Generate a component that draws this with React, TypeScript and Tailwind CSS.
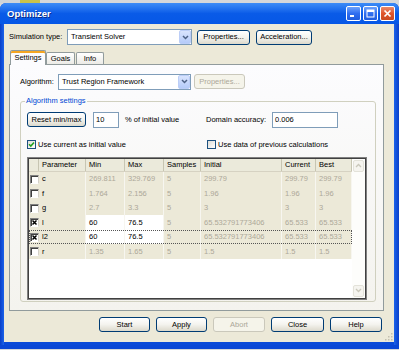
import React from "react";

type Row = {
  name: string;
  min: string;
  max: string;
  samples: string;
  initial: string;
  current: string;
  best: string;
  checked: boolean;
  focused?: boolean;
};

const rows: Row[] = [
  { name: "c", min: "269.811", max: "329.769", samples: "5", initial: "299.79", current: "299.79", best: "299.79", checked: false },
  { name: "f", min: "1.764", max: "2.156", samples: "5", initial: "1.96", current: "1.96", best: "1.96", checked: false },
  { name: "g", min: "2.7", max: "3.3", samples: "5", initial: "3", current: "3", best: "3", checked: false },
  { name: "l", min: "60", max: "76.5", samples: "5", initial: "65.532791773406", current: "65.533", best: "65.533", checked: true },
  { name: "l2", min: "60", max: "76.5", samples: "5", initial: "65.532791773406", current: "65.533", best: "65.533", checked: true, focused: true },
  { name: "r", min: "1.35", max: "1.65", samples: "5", initial: "1.5", current: "1.5", best: "1.5", checked: false },
];

function Chevron() {
  return (
    <svg width="7" height="5" viewBox="0 0 7 5">
      <path d="M1 1 L3.5 3.5 L6 1" fill="none" stroke="#4d6185" strokeWidth="1.5" />
    </svg>
  );
}

function Dropdown({ text, className }: { text: string; className: string }) {
  return (
    <div className={`h-[16px] border border-[#7f9db9] bg-white flex items-center ${className}`}>
      <span className="flex-1 pl-[3px] leading-none whitespace-nowrap overflow-hidden">{text}</span>
      <div className="w-[12px] h-[14px] rounded-[2px] bg-linear-to-b from-[#d9e4fd] to-[#b5cbf9] border border-[#bccef7] flex items-center justify-center">
        <Chevron />
      </div>
    </div>
  );
}

function Btn({ children, className, disabled }: { children: React.ReactNode; className: string; disabled?: boolean }) {
  return (
    <div
      className={
        disabled
          ? `h-[15px] rounded-[3px] border border-[#cac8bb] bg-[#f5f4ea] text-[#aca899] flex items-center justify-center leading-none whitespace-nowrap ${className}`
          : `h-[15px] rounded-[3px] border border-[#003c74] bg-linear-to-b from-white via-[#f4f3ee] to-[#dcd9cc] text-black flex items-center justify-center leading-none whitespace-nowrap ${className}`
      }
    >
      {children}
    </div>
  );
}

function XPCheck({ checked }: { checked: boolean }) {
  return (
    <div className="w-[9px] h-[9px] border border-[#1c5180] bg-linear-to-br from-[#dcdcd7] to-white flex items-center justify-center shrink-0">
      {checked && (
        <svg width="7" height="7" viewBox="0 0 7 7">
          <path d="M1 3.2 L2.8 5 L6 1.5" fill="none" stroke="#21a121" strokeWidth="1.6" />
        </svg>
      )}
    </div>
  );
}

function GridCheck({ checked }: { checked: boolean }) {
  return (
    <div className="w-[9px] h-[9px] border border-t-[#808080] border-l-[#808080] border-b-white border-r-[#d4d0c8] bg-white shadow-[inset_1px_1px_0_#404040] flex items-center justify-center">
      {checked && (
        <svg width="7" height="7" viewBox="0 0 7 7">
          <path d="M1.5 1.5 L5.5 5.5 M5.5 1.5 L1.5 5.5" fill="none" stroke="#000" strokeWidth="1.5" />
        </svg>
      )}
    </div>
  );
}

function TitleBtn({ kind }: { kind: "min" | "max" | "close" }) {
  const bg =
    kind === "close"
      ? "bg-linear-to-b from-[#e98a6a] via-[#e0542c] to-[#c94a22]"
      : "bg-linear-to-b from-[#6fa2fb] via-[#2f6ef0] to-[#1f5cde]";
  return (
    <div className={`w-[15px] h-[15px] rounded-[2px] border border-white flex items-center justify-center ${bg}`}>
      {kind === "min" && (
        <svg width="11" height="11" viewBox="0 0 11 11">
          <rect x="2" y="7" width="4" height="2" fill="white" />
        </svg>
      )}
      {kind === "max" && (
        <svg width="11" height="11" viewBox="0 0 11 11">
          <rect x="2" y="2" width="7" height="7" fill="none" stroke="white" strokeWidth="1" />
          <rect x="2" y="2" width="7" height="2" fill="white" />
        </svg>
      )}
      {kind === "close" && (
        <svg width="11" height="11" viewBox="0 0 11 11">
          <path d="M2.5 2.5 L8.5 8.5 M8.5 2.5 L2.5 8.5" stroke="white" strokeWidth="1.7" />
        </svg>
      )}
    </div>
  );
}

const cellBase = "h-full flex items-center pl-[3px] border-r border-[#f7f6f0] whitespace-nowrap overflow-hidden";

export default function App() {
  return (
    <div className="w-[399px] h-[350px] bg-[#d6d8da] font-['Liberation_Sans',Arial,sans-serif] text-[7.5px] text-black overflow-hidden">
      {/* desktop strip */}
      <div className="h-[3px] flex">
        <div className="w-[20px] bg-[#cfd4d8]" />
        <div className="w-[20px] bg-[#c9c24a]" />
        <div className="flex-1 bg-[#d6d8da]" />
      </div>

      {/* window */}
      <div className="w-[399px] h-[346px] flex flex-col rounded-t-[6px] bg-[#0a4ad8] overflow-hidden">
        {/* title bar */}
        <div className="h-[21px] flex items-center pl-[7px] pr-[4px] bg-linear-to-b from-[#3d8cf7] via-[#0a5be8] to-[#0657e6]">
          <span className="text-white font-bold text-[9.5px] leading-none [text-shadow:1px_1px_0_#0a2a86]">Optimizer</span>
          <div className="ml-auto flex gap-[2px]">
            <TitleBtn kind="min" />
            <TitleBtn kind="max" />
            <TitleBtn kind="close" />
          </div>
        </div>

        <div className="flex-1 flex">
          <div className="w-[4px] bg-linear-to-r from-[#0a3fc8] to-[#1b62ea]" />
          {/* body */}
          <div className="w-[390px] h-[318px] bg-[#ece9d8] pt-[5px] pl-[5px] flex flex-col">
            {/* sim type row */}
            <div className="h-[16px] flex items-center">
              <span className="w-[58px] leading-none whitespace-nowrap">Simulation type:</span>
              <Dropdown text="Transient Solver" className="w-[125px]" />
              <Btn className="w-[53px] ml-[5px]">Properties...</Btn>
              <Btn className="w-[56px] ml-[6px]">Acceleration...</Btn>
            </div>

            {/* tabs */}
            <div className="mt-[4px] h-[15px] flex items-end">
              <div className="relative z-10 ml-[1px] w-[36px] h-[15px] -mb-[1px] border border-b-0 border-[#919b9c] rounded-t-[2px] bg-[#fcfcfe] flex items-center justify-center leading-none shadow-[inset_0_2px_0_#f5a623]">
                Settings
              </div>
              <div className="w-[29px] h-[12px] border border-b-0 border-[#919b9c] rounded-t-[2px] bg-linear-to-b from-white to-[#ecebe6] flex items-center justify-center leading-none">
                Goals
              </div>
              <div className="ml-[1px] w-[28px] h-[12px] border border-b-0 border-[#919b9c] rounded-t-[2px] bg-linear-to-b from-white to-[#ecebe6] flex items-center justify-center leading-none">
                Info
              </div>
            </div>

            {/* panel */}
            <div className="w-[375px] h-[250px] border border-[#919b9c] bg-linear-to-b from-[#fcfcfe] to-[#f4f3ee] pl-[10px] pt-[9px]">
              <div className="h-[16px] flex items-center">
                <span className="w-[38px] leading-none">Algorithm:</span>
                <Dropdown text="Trust Region Framework" className="w-[133px]" />
                <Btn className="w-[51px] ml-[3px]" disabled>
                  Properties...
                </Btn>
              </div>

              {/* group box */}
              <div className="relative mt-[11px] w-[356px] h-[201px] border border-[#d0d0bf] rounded-[3px] pt-[10px] pl-[6px]">
                <span className="absolute -top-[5px] left-[4px] px-[1px] bg-[#fbfbfa] text-[#0046d5] leading-none">Algorithm settings</span>

                <div className="h-[16px] flex items-center">
                  <Btn className="w-[59px]">Reset min/max</Btn>
                  <div className="ml-[7px] w-[26px] h-[16px] border border-[#7f9db9] bg-white flex items-center pl-[2px] leading-none">10</div>
                  <span className="ml-[6px] w-[81px] leading-none">% of initial value</span>
                  <span className="w-[66px] leading-none">Domain accuracy:</span>
                  <div className="w-[66px] h-[16px] border border-[#7f9db9] bg-white flex items-center pl-[2px] leading-none">0.006</div>
                </div>

                <div className="mt-[12px] h-[10px] flex items-center">
                  <div className="w-[180px] flex items-center">
                    <XPCheck checked />
                    <span className="ml-[2px] leading-none">Use current as initial value</span>
                  </div>
                  <XPCheck checked={false} />
                  <span className="ml-[2px] leading-none">Use data of previous calculations</span>
                </div>

                {/* table */}
                <div className="mt-[7px] w-[340px] h-[143px] border border-[#808080] shadow-[inset_1px_1px_0_#404040,inset_-1px_-1px_0_#404040] p-[1px] flex bg-white">
                  <div className="w-[323px] flex flex-col">
                    <div className="h-[13px] grid grid-cols-[10px_47px_39px_39px_37px_81px_34px_36px] bg-[#ebeadb] border-b border-[#d6d2c2]">
                      {["", "Parameter", "Min", "Max", "Samples", "Initial", "Current", "Best"].map((h, i) => (
                        <div key={i} className="h-full flex items-center pl-[3px] border-r border-[#c7c5b2] leading-none whitespace-nowrap">
                          {h}
                        </div>
                      ))}
                    </div>
                    {rows.map((r) => (
                      <div
                        key={r.name}
                        className={`h-[14.5px] grid grid-cols-[10px_47px_39px_39px_37px_81px_34px_36px] bg-[#ece9d8] leading-none ${
                          r.focused ? "outline outline-1 outline-dotted outline-[#555] -outline-offset-1" : ""
                        }`}
                      >
                        <div className="h-full flex items-center justify-center">
                          <GridCheck checked={r.checked} />
                        </div>
                        <div className={`${cellBase} text-black`}>{r.name}</div>
                        <div className={`${cellBase} ${r.checked ? "bg-white text-black" : "text-[#aca899]"}`}>{r.min}</div>
                        <div className={`${cellBase} ${r.checked ? "bg-white text-black" : "text-[#aca899]"}`}>{r.max}</div>
                        <div className={`${cellBase} text-[#aca899]`}>{r.samples}</div>
                        <div className={`${cellBase} text-[#aca899]`}>{r.initial}</div>
                        <div className={`${cellBase} text-[#aca899]`}>{r.current}</div>
                        <div className={`${cellBase} text-[#aca899]`}>{r.best}</div>
                      </div>
                    ))}
                    <div className="flex-1 bg-white" />
                  </div>
                  {/* scrollbar */}
                  <div className="w-[13px] flex flex-col bg-[#fdfdfb]">
                    <div className="h-[12px] m-[1px] rounded-[2px] border border-[#e3e2d9] bg-[#f5f4ef] flex items-center justify-center">
                      <svg width="7" height="5" viewBox="0 0 7 5">
                        <path d="M1 4 L3.5 1.5 L6 4" fill="none" stroke="#c9c7ba" strokeWidth="1.3" />
                      </svg>
                    </div>
                    <div className="flex-1" />
                    <div className="h-[12px] m-[1px] rounded-[2px] border border-[#e3e2d9] bg-[#f5f4ef] flex items-center justify-center">
                      <svg width="7" height="5" viewBox="0 0 7 5">
                        <path d="M1 1 L3.5 3.5 L6 1" fill="none" stroke="#c9c7ba" strokeWidth="1.3" />
                      </svg>
                    </div>
                  </div>
                </div>
              </div>
            </div>

            {/* bottom buttons */}
            <div className="mt-[6px] flex items-center pl-[90px]">
              <Btn className="w-[51px]">Start</Btn>
              <Btn className="w-[51px] ml-[6px]">Apply</Btn>
              <Btn className="w-[52px] ml-[6px]" disabled>
                Abort
              </Btn>
              <Btn className="w-[53px] ml-[6px]">Close</Btn>
              <Btn className="w-[52px] ml-[6px]">Help</Btn>
            </div>
            <div className="flex-1 flex items-end justify-end pr-[1px] pb-[1px]">
              <svg width="9" height="9" viewBox="0 0 9 9">
                <g fill="#c3c0b0">
                  <rect x="7" y="1" width="1.5" height="1.5" />
                  <rect x="4" y="4" width="1.5" height="1.5" />
                  <rect x="7" y="4" width="1.5" height="1.5" />
                  <rect x="1" y="7" width="1.5" height="1.5" />
                  <rect x="4" y="7" width="1.5" height="1.5" />
                  <rect x="7" y="7" width="1.5" height="1.5" />
                </g>
              </svg>
            </div>
          </div>
          <div className="flex-1 bg-linear-to-r from-[#1b62ea] to-[#0a3fc8]" />
        </div>
        <div className="h-[4px] bg-[#0a47d6]" />
      </div>
    </div>
  );
}
